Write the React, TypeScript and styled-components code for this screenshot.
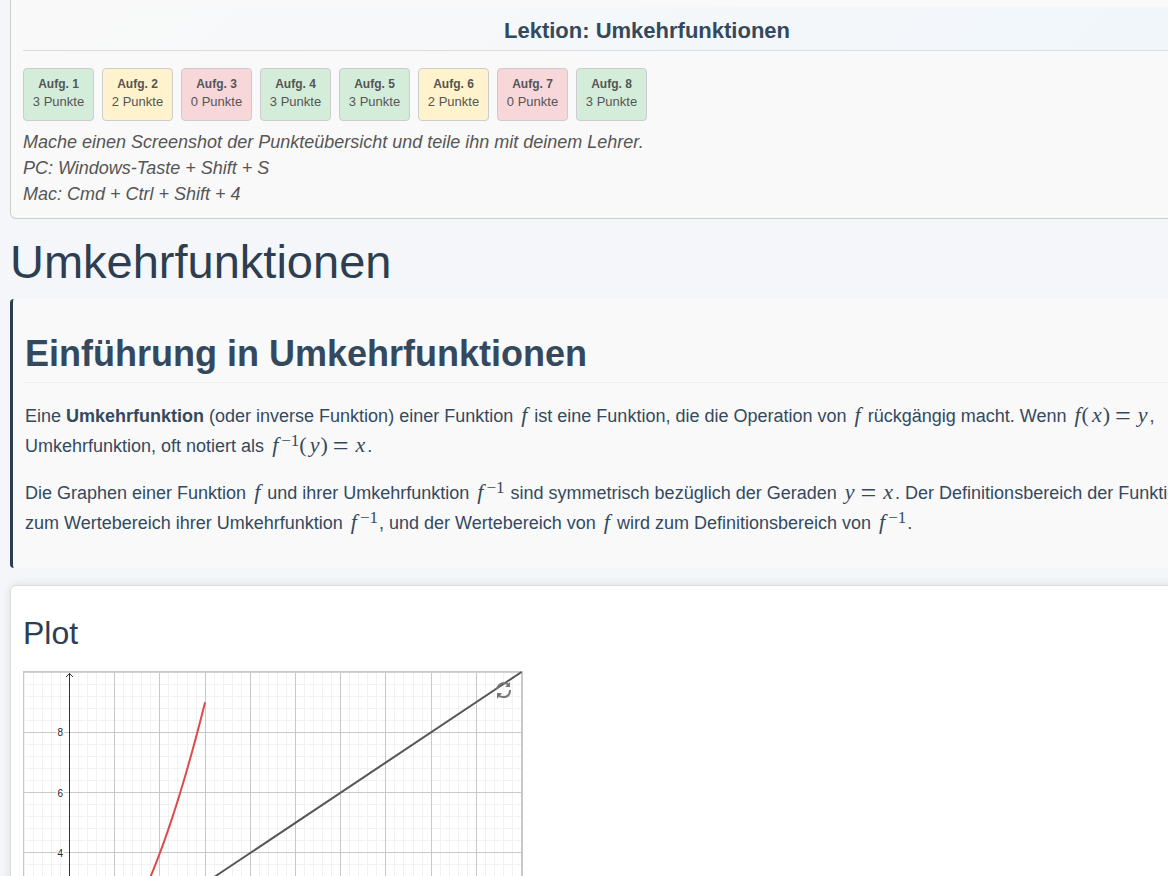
import React from "react";
import styled, { createGlobalStyle } from "styled-components";

const GlobalStyle = createGlobalStyle`
  *, *::before, *::after { box-sizing: border-box; }
  html { overflow-x: hidden; }
  body {
    margin: 0;
    overflow-x: hidden;
    background: #f4f6fa;
    color: #34495e;
    font-family: "Liberation Sans", Arial, sans-serif;
    font-size: 18px;
    line-height: 30px;
  }
`;

const Page = styled.main`
  min-width: 1294px;
  padding: 0 10px 20px;
`;

const ScorePanel = styled.section`
  padding: 7px 12px 11px;
  background: #f9f9f9;
  border: 1px solid #ccc;
  border-top: 0;
  border-radius: 0 0 6px 6px;
`;

const LessonTitle = styled.h2`
  margin: 0;
  padding: 11px 0 6px;
  border-bottom: 1px solid #ddd;
  background: linear-gradient(135deg, #f9f9f9, #f0f6fb);
  color: #34495e;
  font-size: 22px;
  line-height: 26px;
  text-align: center;
`;

const ScoreList = styled.ul`
  display: flex;
  gap: 8px;
  margin: 17px 0 8px;
  padding: 0;
  list-style: none;
`;

const tones = { good: "#d4edda", fair: "#fff3cd", poor: "#f8d7da" };

const ScoreCard = styled.li<{ $tone: keyof typeof tones }>`
  width: 71px;
  padding: 6px 0 9px;
  border: 1px solid #ccc;
  border-radius: 4px;
  background: ${(p) => tones[p.$tone]};
  color: #555;
  font-size: 13px;
  line-height: 18px;
  text-align: center;
`;

const ScoreName = styled.strong`
  display: block;
  font-size: 12px;
`;

const Hint = styled.p`
  margin: 0;
  color: #555;
  font-style: italic;
  line-height: 26px;
`;

const PageTitle = styled.h1`
  margin: 15px 0 9px;
  color: #2c3e50;
  font-size: 47px;
  font-weight: 400;
  line-height: 56px;
`;

const Intro = styled.section`
  padding: 33px 12px 30px;
  border-left: 3px solid #2c3e50;
  border-radius: 4px;
  background: #f9f9f9;
`;

const IntroTitle = styled.h2`
  margin: 0 0 18px;
  padding-bottom: 6px;
  border-bottom: 1px solid #eee;
  font-size: 36px;
  line-height: 44px;
`;

const Paragraph = styled.p`
  margin: 0;
  & + & { margin-top: 17px; }
`;

const Formula = styled.span`
  padding-right: 1px;
  font-family: "Liberation Serif", "Times New Roman", serif;
  font-size: 22px;
  line-height: 1;
  white-space: nowrap;
`;

const Variable = styled.i`
  padding: 0 1px 0 3px;
`;

const Relation = styled.span`
  padding: 0 4px 0 5px;
  font-size: 28px;
  line-height: 0;
  vertical-align: -3px;
`;

const Exponent = styled.sup`
  padding-left: 2px;
  font-size: 17px;
  line-height: 0;
  vertical-align: 6px;
`;

const PlotPanel = styled.section`
  margin-top: 17px;
  padding: 27px 12px 20px;
  border: 1px solid #ddd;
  border-radius: 6px;
  background: #fff;
  box-shadow: 0 0 10px rgba(0, 0, 0, 0.1);
`;

const PlotTitle = styled.h3`
  margin: 0 0 18px;
  color: #2c3e50;
  font-size: 32px;
  font-weight: 400;
  line-height: 40px;
`;

const Graph = styled.svg`
  display: block;
  font-family: "Liberation Sans", Arial, sans-serif;
`;

const scores: { points: number; tone: keyof typeof tones }[] = [
  { points: 3, tone: "good" },
  { points: 2, tone: "fair" },
  { points: 0, tone: "poor" },
  { points: 3, tone: "good" },
  { points: 3, tone: "good" },
  { points: 2, tone: "fair" },
  { points: 0, tone: "poor" },
  { points: 3, tone: "good" },
];

const F = () => (
  <Formula><Variable>f</Variable></Formula>
);

const Inverse = () => (
  <Formula><Variable>f</Variable><Exponent>−1</Exponent></Formula>
);

const WIDTH = 500;
const HEIGHT = 400;
const px = (x: number) => 46.5 + x * 45.2;
const py = (y: number) => 1 + (10 - y) * 30.15;
const range = (from: number, to: number) =>
  Array.from({ length: to - from + 1 }, (_, i) => from + i);

const parabola = range(0, 60)
  .map((i) => `${px(i / 20)},${py((i / 20) ** 2)}`)
  .join(" ");

function FunctionGraph() {
  return (
    <Graph width={WIDTH} height={HEIGHT} role="img" aria-label="Graph der Funktion">
      <g stroke="#f1f1f1" shapeRendering="crispEdges">
        {range(-5, 52).map((i) => (
          <line key={`x${i}`} x1={px(i / 5)} x2={px(i / 5)} y1="0" y2={HEIGHT} />
        ))}
        {range(-8, 24).map((i) => (
          <line key={`y${i}`} x1="0" x2={WIDTH} y1={py(i / 2.5)} y2={py(i / 2.5)} />
        ))}
      </g>
      <g stroke="#c8c8c8" shapeRendering="crispEdges">
        {range(1, 10).map((i) => (
          <line key={`x${i}`} x1={px(i)} x2={px(i)} y1="0" y2={HEIGHT} />
        ))}
        {range(-1, 4).map((i) => (
          <line key={`y${i}`} x1="0" x2={WIDTH} y1={py(i * 2)} y2={py(i * 2)} />
        ))}
      </g>
      <rect x="0.5" y="0.5" width={WIDTH - 1} height={HEIGHT - 1} fill="none" stroke="#c8c8c8" />
      <path d={`M0 1.5H${WIDTH}`} stroke="#d0d0d0" />
      <g stroke="#333" fill="none">
        <path d={`M46.5 2V${HEIGHT}M0 ${py(0)}H${WIDTH}`} />
        <path d="M43 6L46.5 2.5L50 6" />
      </g>
      <g fill="#222" stroke="#fff" strokeWidth="3" paintOrder="stroke" fontSize="10" textAnchor="end">
        {[8, 6, 4].map((n) => (
          <text key={n} x="40" y={py(n) + 4}>{n}</text>
        ))}
      </g>
      <polyline points={parabola} fill="none" stroke="#dc4b4b" strokeWidth="2" />
      <path d={`M${px(-1)} ${py(-1)}L${px(10)} ${py(10)}`} stroke="#555" strokeWidth="2" />
      <g fill="none" stroke="#777" strokeWidth="2">
        <path d="M474 18Q476 12 481 12Q484 12 486 14" />
        <path d="M487 19Q487 26 480 26Q477 26 475 24" />
        <path d="M487 11V16H482Z M474 28V22H479Z" fill="#777" stroke="none" />
      </g>
    </Graph>
  );
}

export default function App() {
  return (
    <>
      <GlobalStyle />
      <Page>
        <ScorePanel>
          <LessonTitle>Lektion: Umkehrfunktionen</LessonTitle>
          <ScoreList>
            {scores.map(({ points, tone }, i) => (
              <ScoreCard key={i} $tone={tone}>
                <ScoreName>Aufg. {i + 1}</ScoreName>
                {points} Punkte
              </ScoreCard>
            ))}
          </ScoreList>
          <Hint>
            Mache einen Screenshot der Punkteübersicht und teile ihn mit deinem Lehrer.
            <br />
            PC: Windows-Taste + Shift + S
            <br />
            Mac: Cmd + Ctrl + Shift + 4
          </Hint>
        </ScorePanel>
        <PageTitle>Umkehrfunktionen</PageTitle>
        <Intro>
          <IntroTitle>Einführung in Umkehrfunktionen</IntroTitle>
          <Paragraph>
            Eine <strong>Umkehrfunktion</strong> (oder inverse Funktion) einer Funktion <F /> ist
            eine Funktion, die die Operation von <F /> rückgängig macht. Wenn{" "}
            <Formula>
              <Variable>f</Variable>(<Variable>x</Variable>)<Relation>=</Relation>
              <Variable>y</Variable>
            </Formula>
            ,
            <br />
            Umkehrfunktion, oft notiert als{" "}
            <Formula>
              <Variable>f</Variable><Exponent>−1</Exponent>(<Variable>y</Variable>)
              <Relation>=</Relation><Variable>x</Variable>
            </Formula>
            .
          </Paragraph>
          <Paragraph>
            Die Graphen einer Funktion <F /> und ihrer Umkehrfunktion <Inverse /> sind symmetrisch
            bezüglich der Geraden{" "}
            <Formula>
              <Variable>y</Variable><Relation>=</Relation><Variable>x</Variable>
            </Formula>
            . Der Definitionsbereich der Funktion
            <br />
            zum Wertebereich ihrer Umkehrfunktion <Inverse />, und der Wertebereich von <F /> wird
            zum Definitionsbereich von <Inverse />.
          </Paragraph>
        </Intro>
        <PlotPanel>
          <PlotTitle>Plot</PlotTitle>
          <FunctionGraph />
        </PlotPanel>
      </Page>
    </>
  );
}
